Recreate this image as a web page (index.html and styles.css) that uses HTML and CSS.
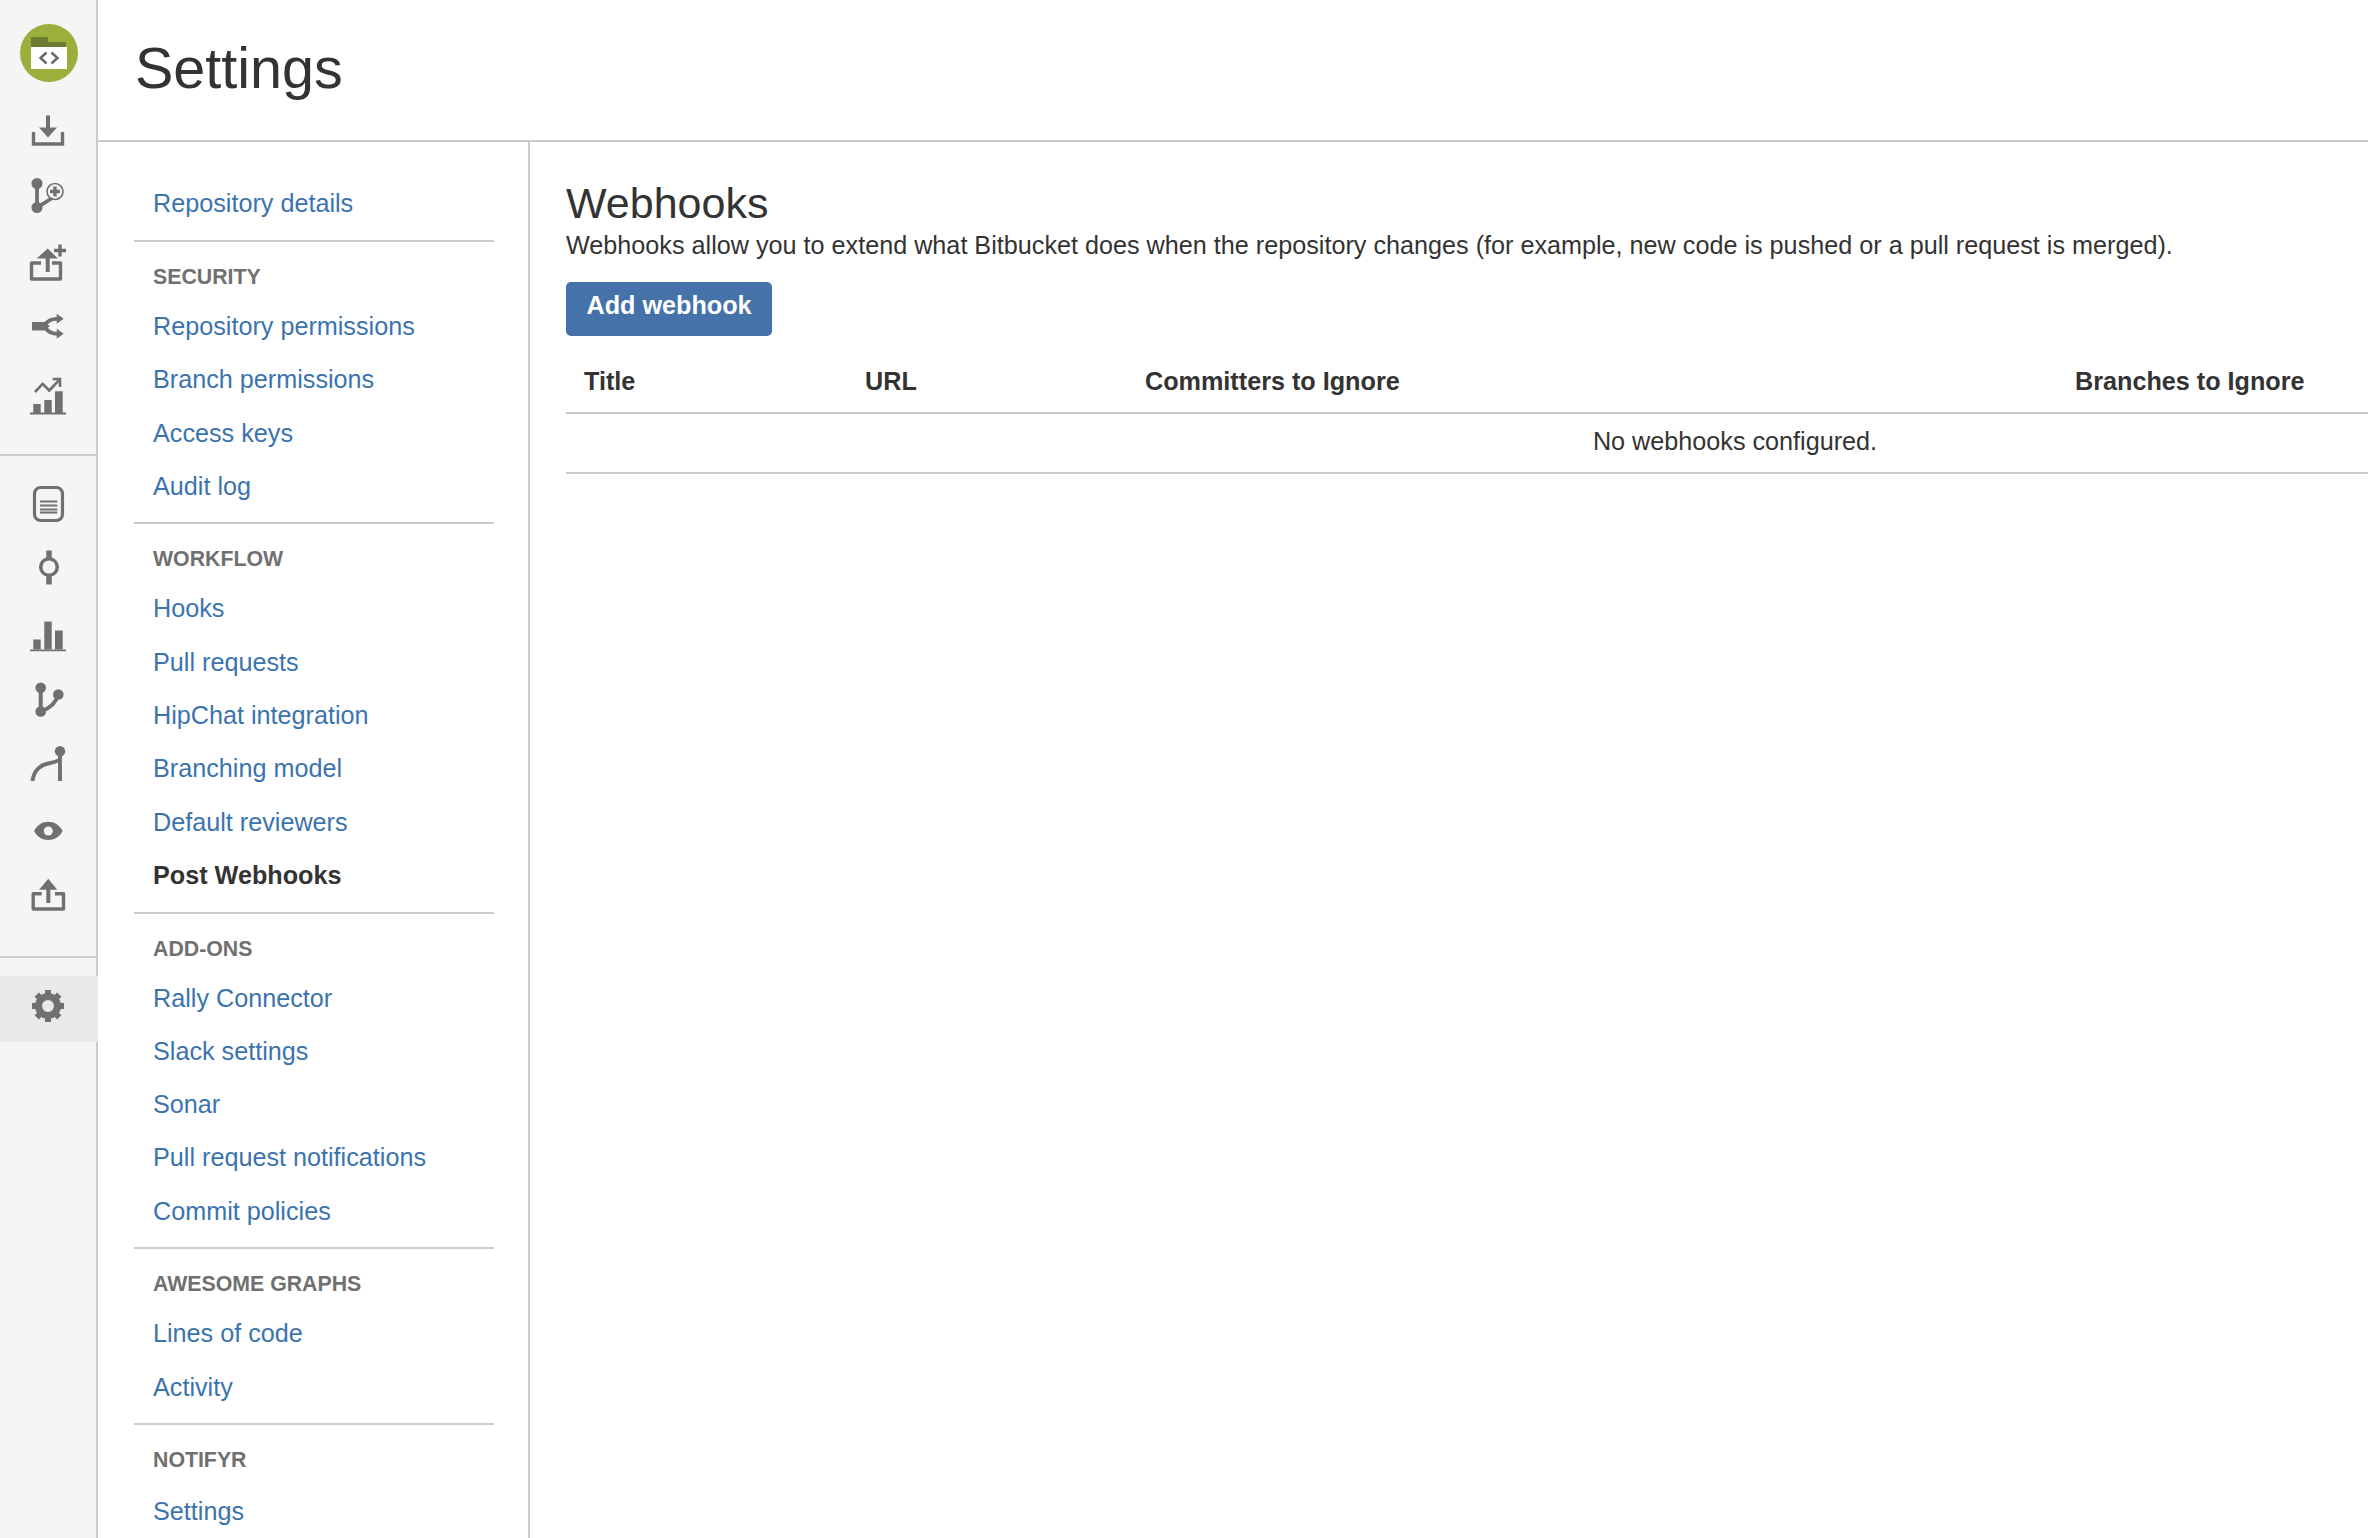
FILE: index.html

```html
<!DOCTYPE html>
<html lang="en">
<head>
    <meta charset="UTF-8">
    <title>Settings</title>
    <link rel="stylesheet" href="styles.css">
</head>
<body>
    <div class="page">
        <nav class="rail">
            <div class="rail-group rail-top">
                <svg class="logo" width="58" height="58" viewBox="0 0 58 58">
                    <circle cx="29" cy="29" r="29" fill="#9aaf3c"/>
                    <path d="M11 13h17v5h18v7H11z" fill="#6c7c30"/>
                    <rect x="11" y="23" width="36" height="22" fill="#fff"/>
                    <path d="M26.500 28.500l-6 5.500 6 5.500M31.500 28.500l6 5.500-6 5.500" fill="none" stroke="#666" stroke-width="2.400"/>
                </svg>
                <a class="rail-icon"><svg width="36" height="36" viewBox="0 0 36 36"><path d="M3.500 19v12h29V19" fill="none" stroke="#707070" stroke-width="3.400"/><path d="M18 2.500V16" stroke="#707070" stroke-width="4"/><path d="M9 14.500h18l-9 10z" fill="#707070"/></svg></a>
                <a class="rail-icon"><svg width="36" height="36" viewBox="0 0 36 36"><circle cx="7" cy="5.500" r="5.500" fill="#707070"/><circle cx="7" cy="29.500" r="5.500" fill="#707070"/><path d="M7 5.500v24l16-10" fill="none" stroke="#707070" stroke-width="3.800"/><circle cx="25" cy="13.500" r="8" fill="#f5f5f5" stroke="#707070" stroke-width="1.600"/><path d="M25 8.500v10M20 13.500h10" stroke="#707070" stroke-width="3.400"/></svg></a>
                <a class="rail-icon"><svg width="36" height="36" viewBox="0 0 36 36"><path d="M11 20H1.500v16h29V20H22" fill="none" stroke="#707070" stroke-width="3.400" stroke-linejoin="round"/><path d="M6.700 15.500L17.700 5.500l10.300 10z" fill="#707070"/><path d="M17.700 14v15" stroke="#707070" stroke-width="4"/><path d="M30 1.500v12M24 7.500h12" stroke="#707070" stroke-width="3.400"/></svg></a>
                <a class="rail-icon"><svg width="36" height="36" viewBox="0 0 36 36"><path d="M2 14h12l6 4-6 4.500H2z" fill="#707070"/><path d="M15 16.500c3-4 6-5.700 12-5.700M15 19.500c3 4 6 6.300 12 6.300" fill="none" stroke="#707070" stroke-width="3.800"/><path d="M26.700 5.800l7 5-7 5zM26.700 20.800l7 5-7 5z" fill="#707070"/></svg></a>
                <a class="rail-icon"><svg width="36" height="36" viewBox="0 0 36 36"><path d="M3.300 31h7.400v9H3.300zM14.300 27h7.400v13h-7.400zM25 18.200h7.700V40H25z" fill="#707070"/><path d="M0 40.500h36" stroke="#707070" stroke-width="2"/><path d="M5 19l7.700-8.200 6.600 6.700 10-10.700M22.700 6H30v8" fill="none" stroke="#707070" stroke-width="2.600"/></svg></a>
            </div>
            <div class="rail-group rail-mid">
                <a class="rail-icon"><svg width="36" height="36" viewBox="0 0 36 36"><rect x="4.500" y="0.500" width="28" height="33" rx="6" fill="none" stroke="#707070" stroke-width="3.200"/><path d="M10 14.500h17.300M10 18.500h17.300M10 22.500h17.300M10 25.500h17.300" stroke="#707070" stroke-width="1.800"/></svg></a>
                <a class="rail-icon"><svg width="36" height="36" viewBox="0 0 36 36"><circle cx="19" cy="15" r="8.300" fill="none" stroke="#707070" stroke-width="3.500"/><path d="M19 -1.500v9M19 23v9.500" stroke="#707070" stroke-width="5.500"/></svg></a>
                <a class="rail-icon"><svg width="36" height="36" viewBox="0 0 36 36"><path d="M3.300 22.500h7.400v10H3.300zM14.300 4.500h7.400v28h-7.400zM25 13.500h7.700v19H25z" fill="#707070"/><path d="M0 33.400h36" stroke="#707070" stroke-width="1.800"/></svg></a>
                <a class="rail-icon"><svg width="36" height="36" viewBox="0 0 36 36"><circle cx="10.700" cy="5.800" r="5.300" fill="#707070"/><circle cx="10.700" cy="29.500" r="5.300" fill="#707070"/><circle cx="28.300" cy="12.500" r="5.300" fill="#707070"/><path d="M10.700 5.800v23.700c9-3 15-8 17.600-17" fill="none" stroke="#707070" stroke-width="4"/></svg></a>
                <a class="rail-icon"><svg width="36" height="36" viewBox="0 0 36 36"><circle cx="30" cy="4.200" r="5.200" fill="#707070"/><path d="M30 4.200V34M2.500 34C4 22 12 17.500 18 16.500c5-1 9-2 12-4" fill="none" stroke="#707070" stroke-width="3.900"/></svg></a>
                <a class="rail-icon"><svg width="36" height="36" viewBox="0 0 36 36"><path d="M4 19C10 6.500 26.500 6.500 32.700 19 26.500 31 10 31 4 19z" fill="#707070"/><circle cx="18.300" cy="19" r="4.500" fill="#f5f5f5"/></svg></a>
                <a class="rail-icon"><svg width="36" height="36" viewBox="0 0 36 36"><path d="M11.700 16.700H3.200V32h30.300V16.700H25" fill="none" stroke="#707070" stroke-width="3.400" stroke-linejoin="round"/><path d="M9 12.800l9.300-11 9 11z" fill="#707070"/><path d="M18.300 11v15" stroke="#707070" stroke-width="4"/></svg></a>
            </div>
            <div class="rail-group rail-last">
                <a class="rail-icon is-active"><svg width="36" height="36" viewBox="0 0 36 36"><circle cx="18" cy="18" r="9.500" fill="none" stroke="#707070" stroke-width="7"/><path d="M18 2v7M18 27v7M2 18h7M27 18h7M6.700 6.700l5 5M24.300 24.300l5 5M29.300 6.700l-5 5M11.700 24.300l-5 5" stroke="#707070" stroke-width="6"/></svg></a>
            </div>
        </nav>

        <div class="main">
            <header class="page-head">
                <h1>Settings</h1>
            </header>
            <div class="columns">
                <aside class="side">
                    <ul class="side-list lead">
                        <li><a href="#">Repository details</a></li>
                    </ul>
                    <h6>SECURITY</h6>
                    <ul class="side-list">
                        <li><a href="#">Repository permissions</a></li>
                        <li><a href="#">Branch permissions</a></li>
                        <li><a href="#">Access keys</a></li>
                        <li><a href="#">Audit log</a></li>
                    </ul>
                    <h6>WORKFLOW</h6>
                    <ul class="side-list">
                        <li><a href="#">Hooks</a></li>
                        <li><a href="#">Pull requests</a></li>
                        <li><a href="#">HipChat integration</a></li>
                        <li><a href="#">Branching model</a></li>
                        <li><a href="#">Default reviewers</a></li>
                        <li><a href="#" class="current">Post Webhooks</a></li>
                    </ul>
                    <h6>ADD-ONS</h6>
                    <ul class="side-list">
                        <li><a href="#">Rally Connector</a></li>
                        <li><a href="#">Slack settings</a></li>
                        <li><a href="#">Sonar</a></li>
                        <li><a href="#">Pull request notifications</a></li>
                        <li><a href="#">Commit policies</a></li>
                    </ul>
                    <h6>AWESOME GRAPHS</h6>
                    <ul class="side-list">
                        <li><a href="#">Lines of code</a></li>
                        <li><a href="#">Activity</a></li>
                    </ul>
                    <h6>NOTIFYR</h6>
                    <ul class="side-list no-line">
                        <li><a href="#">Settings</a></li>
                    </ul>
                </aside>
                <section class="content">
                    <h2>Webhooks</h2>
                    <p>Webhooks allow you to extend what Bitbucket does when the repository changes (for example, new code is pushed or a pull request is merged).</p>
                    <button type="button" class="add-btn">Add webhook</button>
                    <table class="hooks">
                        <thead>
                            <tr>
                                <th class="col-title">Title</th>
                                <th class="col-url">URL</th>
                                <th class="col-ignore">Committers to Ignore</th>
                                <th>Branches to Ignore</th>
                            </tr>
                        </thead>
                        <tbody>
                            <tr>
                                <td colspan="4">No webhooks configured.</td>
                            </tr>
                        </tbody>
                    </table>
                </section>
            </div>
        </div>
    </div>
</body>
</html>
```

FILE: styles.css

```css
html, body{
    margin: 0;
    height: 100%;
    overflow: hidden;
    background-color: #fff;
}

body{
    font-family: "Liberation Sans", Arial, sans-serif;
    font-size: 25.2px;
    color: #333;
}

.page{
    display: flex;
    height: 1538px;
}

.rail{
    width: 96px;
    flex: none;
    background-color: #f5f5f5;
    border-right: 2px solid #ccc;
}

.rail-group{
    display: flex;
    flex-direction: column;
    align-items: center;
    border-bottom: 2px solid #ccc;
    box-sizing: border-box;
}

.rail svg{
    flex: none;
    overflow: visible;
}

.rail-top{
    padding-top: 24px;
    height: 456px;
}

.logo{
    margin: 0 0 16px 2px;
}

.rail-mid{
    padding-top: 16px;
    height: 502px;
}

.rail-last{
    border-bottom: 0;
    padding-top: 18px;
    align-items: stretch;
}

.rail-icon{
    display: flex;
    justify-content: center;
    align-items: center;
    height: 65px;
    flex: none;
}

.rail-icon.is-active{
    height: 66px;
    box-sizing: border-box;
    margin-right: -2px;
    padding: 0 2px 7px 0;
    background-color: #e9e9e9;
}

.main{
    flex: 1;
    min-width: 0;
    display: flex;
    flex-direction: column;
}

.page-head{
    height: 140px;
    flex: none;
    border-bottom: 2px solid #ccc;
    padding-left: 37px;
}

h1{
    margin: 0;
    padding-top: 33px;
    font-size: 57.500px;
    line-height: 70px;
    font-weight: normal;
    color: #333;
}

.columns{
    flex: 1;
    display: flex;
    min-height: 0;
}

.side{
    width: 432px;
    flex: none;
    box-sizing: border-box;
    padding: 35px 34px 0 36px;
    border-right: 2px solid #ccc;
}

.side-list{
    list-style: none;
    margin: 0;
    padding: 0 0 9.300px 0;
    border-bottom: 2px solid #ccc;
}

.side-list.lead{
    padding-bottom: 9.700px;
}

.side-list.no-line{
    border-bottom: 0;
    padding-top: 2px;
}

.side-list li{
    line-height: 53.300px;
    padding-left: 19px;
}

.side-list a{
    color: #3b73af;
    text-decoration: none;
}

.side-list a.current{
    color: #333;
    font-weight: bold;
}

h6{
    margin: 0;
    padding: 19px 0 7px 19px;
    font-size: 21.300px;
    line-height: 32px;
    font-weight: bold;
    color: #707070;
}

.content{
    flex: 1;
    min-width: 0;
    padding: 35px 0 0 36px;
    overflow: hidden;
}

h2{
    margin: 0;
    font-size: 43px;
    line-height: 53px;
    font-weight: normal;
    color: #333;
}

.content p{
    margin: 0;
    line-height: 30px;
    color: #333;
}

.add-btn{
    display: block;
    margin-top: 22px;
    width: 206px;
    height: 54px;
    padding: 0 0 7px;
    border: 0;
    border-radius: 5px;
    background-color: #4672aa;
    color: #fff;
    font-family: inherit;
    font-size: 25.2px;
    font-weight: bold;
}

.hooks{
    width: 2338px;
    table-layout: fixed;
    margin-top: 18px;
    border-collapse: collapse;
}

.hooks th{
    text-align: left;
    height: 59px;
    padding: 0 0 4px 18px;
    box-sizing: border-box;
    font-weight: bold;
    border-bottom: 2px solid #ccc;
}

.hooks .col-title{
    width: 281px;
}

.hooks .col-url{
    width: 280px;
}

.hooks .col-ignore{
    width: 930px;
}

.hooks td{
    text-align: center;
    height: 60px;
    padding: 0 0 3px;
    box-sizing: border-box;
    border-bottom: 2px solid #ccc;
}
```
